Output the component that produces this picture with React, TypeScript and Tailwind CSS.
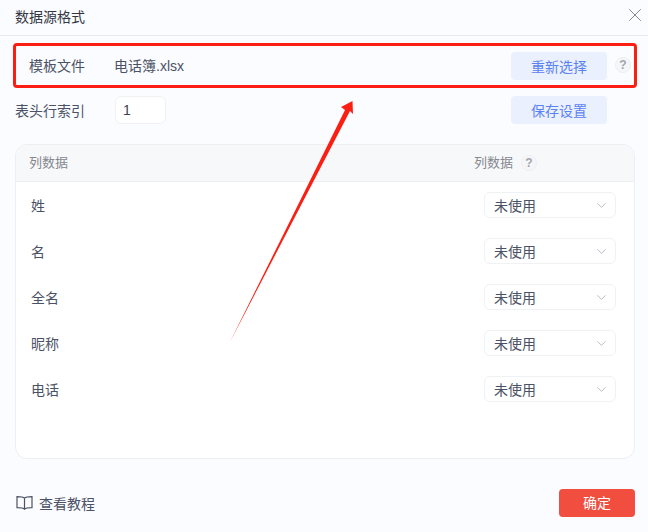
import React from 'react';
import { X, ChevronDown } from 'lucide-react';

const fields = ['姓', '名', '全名', '昵称', '电话'];

const Help = () => (
  <span className="flex h-4 w-4 items-center justify-center rounded-full border border-[#eceef2] bg-[#f5f6f8] text-xs leading-none font-bold text-[#a2a5ad]">
    ?
  </span>
);

const ActionButton = ({ label }: { label: string }) => (
  <button className="h-7 w-24 rounded bg-[#eaf0fe] pt-px text-sm text-[#5b82f0]">{label}</button>
);

const BookIcon = () => (
  <svg width="17" height="16" viewBox="0 0 17 16" fill="none" stroke="#4b5265" strokeWidth="1.2">
    <path d="M8.5 3.2C7.5 2 6 1.6 1 1.6V12.6C6 12.6 7.5 13 8.5 14.2C9.5 13 11 12.6 16 12.6V1.6C11 1.6 9.5 2 8.5 3.2Z" />
    <path d="M8.5 3.2V14.2" />
  </svg>
);

const App: React.FC = () => {
  return (
    <div
      className="relative flex h-[532px] w-[648px] flex-col overflow-hidden bg-[#fbfcff] text-sm text-[#4b5265]"
      style={{ fontFamily: '"Liberation Sans", "Noto Sans CJK SC", sans-serif' }}
    >
      <div className="flex h-9 shrink-0 items-center justify-between border-b border-[#e8e9ec] pr-[2px] pl-[15px]">
        <span className="-mt-px text-[#33373f]">数据源格式</span>
        <X size={22} strokeWidth={0.9} className="-mt-[5px] text-[#6b6f78]" />
      </div>

      <div className="mt-4 flex h-7 shrink-0 items-center pr-[17px] pl-[29px]">
        <span className="w-[85px]">模板文件</span>
        <span className="flex-1">电话簿.xlsx</span>
        <ActionButton label="重新选择" />
        <span className="ml-2 -translate-y-px">
          <Help />
        </span>
      </div>

      <div className="mt-4 flex h-7 shrink-0 items-center pr-[41px] pl-[15px]">
        <span className="w-[100px] pt-0.5">表头行索引</span>
        <div className="flex h-7 w-[51px] items-center rounded-md border border-[#f0f1f4] bg-white pl-[7px] text-[#3c4150]">
          1
        </div>
        <span className="flex-1" />
        <ActionButton label="保存设置" />
      </div>

      <div className="mt-5 ml-[15px] flex h-[315px] w-[620px] shrink-0 flex-col overflow-hidden rounded-xl border border-[#eceef1] bg-white">
        <div className="flex h-[37px] shrink-0 items-center border-b border-[#eceef1] bg-[#f7f8fa] pl-[13px] text-[13px] text-[#85888f]">
          <span className="w-[445px]">列数据</span>
          <span>列数据</span>
          <span className="ml-2">
            <Help />
          </span>
        </div>
        <div className="flex flex-col gap-5 pt-[10px] pr-[18px] pl-[15px]">
          {fields.map((name) => (
            <div key={name} className="flex h-[26px] items-center justify-between">
              <span className="pt-0.5">{name}</span>
              <div className="flex h-[26px] w-[132px] items-center justify-between rounded-md border border-[#f0f1f4] bg-white pr-[6px] pl-[9px]">
                <span className="pt-0.5">未使用</span>
                <ChevronDown size={15} strokeWidth={1.2} className="text-[#a3a7b3]" />
              </div>
            </div>
          ))}
        </div>
      </div>

      <div className="mt-[30px] flex h-7 shrink-0 items-center justify-between pr-[13px] pl-[16px]">
        <div className="flex items-center gap-[6px]">
          <BookIcon />
          <span className="pt-0.5">查看教程</span>
        </div>
        <button className="h-7 w-[76px] rounded bg-[#f24e40] text-white">确定</button>
      </div>

      {/* annotation drawn over the screenshot */}
      <div className="absolute top-[43px] left-[13px] h-[45px] w-[624px] rounded-sm border-[3px] border-[#fb1f13]" />
      <svg className="absolute top-0 left-0" width="648" height="532" viewBox="0 0 648 532">
        <polygon
          points="230,342 345,110 341,107 352.5,101 353,114 350,111"
          fill="#fb1f13"
        />
      </svg>
    </div>
  );
};

export default App;
